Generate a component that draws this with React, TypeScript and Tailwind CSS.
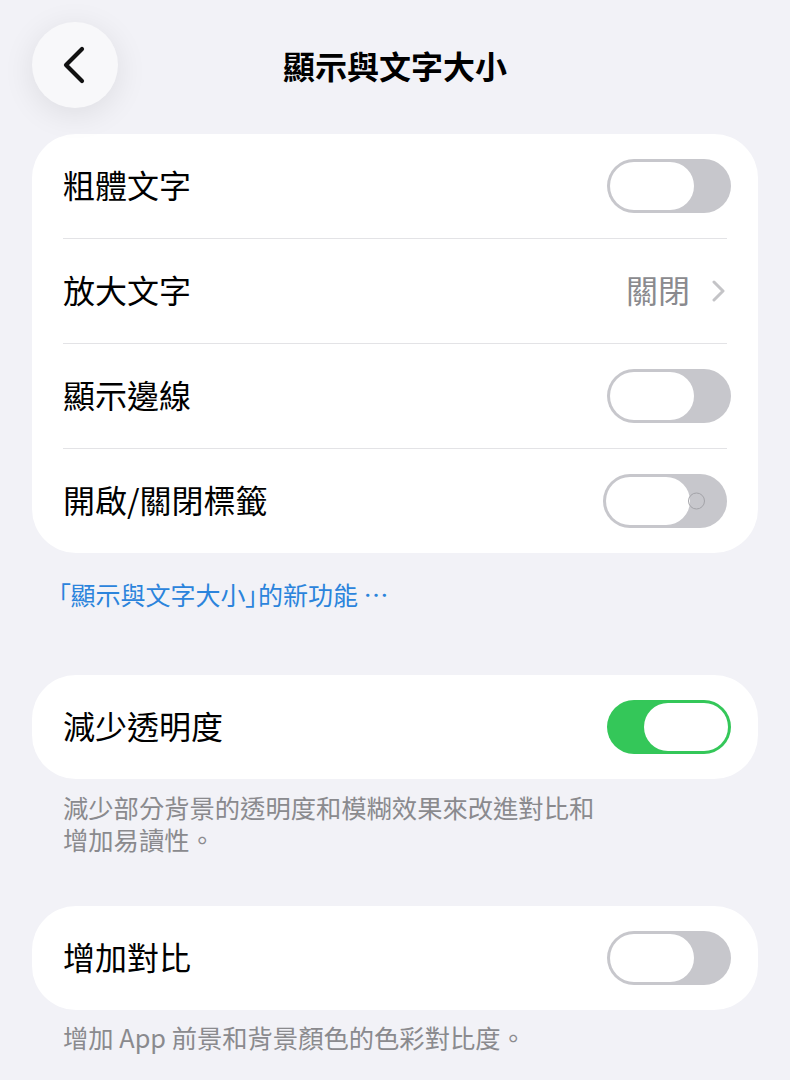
import { ReactNode } from "react";

const FONT = { fontFamily: '"Noto Sans CJK TC", "Noto Sans", sans-serif' };

function Toggle({ on = false, labelled = false }: { on?: boolean; labelled?: boolean }) {
  return (
    <div
      className={`relative flex h-[54px] w-[124px] items-center rounded-full p-[3px] ${
        on ? "justify-end bg-[#34c759]" : "justify-start bg-[#c7c7cc]"
      }`}
    >
      {labelled && !on && (
        <span className="absolute right-[22px] top-1/2 h-[17px] w-[17px] -translate-y-1/2 rounded-full border-[1.5px] border-[#a3a3a8]" />
      )}
      <div className="h-full w-[84px] rounded-full bg-white" />
    </div>
  );
}

function Row({
  label,
  children,
  divider = false,
  right = "pr-[27px]",
}: {
  label: string;
  children: ReactNode;
  divider?: boolean;
  right?: string;
}) {
  return (
    <div className="flex flex-col">
      <div className={`flex h-[104px] items-center justify-between pl-[31px] ${right}`}>
        <span className="pb-[4px] text-[32px] leading-none text-black">{label}</span>
        {children}
      </div>
      {divider && <div className="mx-[31px] h-px bg-[#e3e3e6]" />}
    </div>
  );
}

function Card({ children }: { children: ReactNode }) {
  return <div className="overflow-hidden rounded-[44px] bg-white">{children}</div>;
}

export default function App() {
  return (
    <div className="min-h-[1080px] w-[790px] bg-[#f2f2f7] px-[32px]" style={FONT}>
      {/* header */}
      <div className="flex h-[134px] items-start pt-[22px]">
        <button className="flex h-[86px] w-[86px] items-center justify-center rounded-full bg-[#f8f8fa] shadow-[0_6px_32px_rgba(0,0,0,0.09)]">
          <svg width="30" height="40" viewBox="0 0 30 40" fill="none">
            <path
              d="M22 4 L6 20 L22 36"
              stroke="#111"
              strokeWidth="4.2"
              strokeLinecap="round"
              strokeLinejoin="round"
            />
          </svg>
        </button>
        <div className="flex h-[86px] flex-1 items-center justify-center">
          <h1 className="text-[32px] font-semibold leading-none text-black">顯示與文字大小</h1>
        </div>
        <div className="w-[86px]" />
      </div>

      <Card>
        <Row label="粗體文字" divider>
          <Toggle />
        </Row>
        <Row label="放大文字" divider right="pr-[33px]">
          <div className="flex items-center gap-[22px]">
            <span className="pb-[4px] text-[32px] leading-none text-[#8a8a8e]">關閉</span>
            <svg width="13" height="22" viewBox="0 0 13 22" fill="none">
              <path
                d="M2 2 L11 11 L2 20"
                stroke="#c4c4c7"
                strokeWidth="3"
                strokeLinecap="round"
                strokeLinejoin="round"
              />
            </svg>
          </div>
        </Row>
        <Row label="顯示邊線" divider>
          <Toggle />
        </Row>
        <Row label="開啟/關閉標籤" right="pr-[31px]">
          <Toggle labelled />
        </Row>
      </Card>

      <p className="mt-[25px] pl-[26px] text-[25px] leading-[32px] text-[#2b84dc] [font-feature-settings:'palt']">
        「顯示與文字大小」的新功能 ⋯
      </p>

      <div className="mt-[65px]">
        <Card>
          <Row label="減少透明度">
            <Toggle on />
          </Row>
        </Card>
      </div>
      <p className="mt-[12px] pl-[31px] text-[25.3px] leading-[32px] text-[#8a8a8e]">
        減少部分背景的透明度和模糊效果來改進對比和
        <br />
        增加易讀性。
      </p>

      <div className="mt-[51px]">
        <Card>
          <Row label="增加對比">
            <Toggle />
          </Row>
        </Card>
      </div>
      <p className="mt-[11px] pl-[31px] text-[25.3px] leading-[32px] text-[#8a8a8e]">
        增加 App 前景和背景顏色的色彩對比度。
      </p>
    </div>
  );
}
